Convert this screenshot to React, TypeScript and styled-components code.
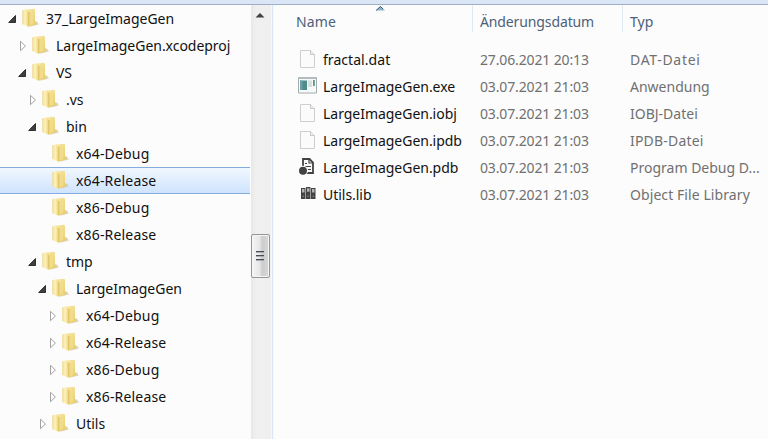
import React from "react";
import styled, { createGlobalStyle, css } from "styled-components";

const GlobalStyle = createGlobalStyle`
  * { box-sizing: border-box; }
  body {
    margin: 0;
    background: #fcfcfc;
    overflow: hidden;
    font-family: "Noto Sans", "Segoe UI", sans-serif;
    font-size: 14px;
    color: #111;
  }
`;

const Window = styled.div`
  height: 439px;
  display: flex;
  flex-direction: column;
  overflow: hidden;
`;

const TopEdge = styled.div`
  flex: none;
  height: 5px;
  background: #dae6f5;
  border-bottom: 1px solid #a0afc3;
`;

const Panes = styled.div`
  flex: 1;
  min-height: 0;
  display: flex;
`;

const Tree = styled.div`
  width: 251px;
  flex: none;
  overflow: hidden;
`;

const TreeRow = styled.div<{ $level: number; $selected?: boolean }>`
  height: 27px;
  display: flex;
  align-items: center;
  padding-left: ${(p) => 7 + p.$level * 10}px;
  ${(p) =>
    p.$selected &&
    css`
      background: linear-gradient(#f1f7fe, #cfe4fe);
      border-top: 1px solid #84acdd;
      border-bottom: 1px solid #84acdd;
      margin-right: 1px;
    `}
`;

const Toggle = styled.svg`
  flex: none;
  width: 12px;
  height: 14px;
`;

const FolderSvg = styled.svg`
  flex: none;
  width: 19px;
  height: 20px;
  margin: 0 6px 1px 2px;
`;

const Label = styled.span<{ $spacing?: number }>`
  white-space: nowrap;
  line-height: 20px;
  letter-spacing: ${(p) => p.$spacing ?? -0.03}px;
`;

const ScrollTrack = styled.div`
  width: 20px;
  flex: none;
  display: flex;
  flex-direction: column;
  align-items: flex-start;
  background: linear-gradient(90deg, #e8e8e8, #f0f0f0 25%, #efefef);
`;

const ScrollArrow = styled.svg`
  width: 10px;
  height: 6px;
  margin: 7px 0 216px 4px;
  flex: none;
`;

const Thumb = styled.div`
  width: 19px;
  height: 44px;
  flex: none;
  display: flex;
  flex-direction: column;
  align-items: center;
  justify-content: center;
  gap: 2px;
  border: 1px solid #959595;
  border-radius: 2px;
  background: linear-gradient(90deg, #f6f6f6, #e6e6e6 45%, #cdcdcd 60%, #d8d8d8);
  box-shadow: inset 0 0 0 1px #f5f5f5;
`;

const Grip = styled.div`
  width: 8px;
  height: 2px;
  margin-left: -1px;
  background: linear-gradient(#484d55 50%, #a8abb0 50%);
`;

const Splitter = styled.div`
  width: 3px;
  flex: none;
  background: linear-gradient(90deg, #f5f8fc 33%, #d9e6f5 33% 66%, #f4f8fd 66%);
`;

const Files = styled.div`
  flex: 1;
  min-width: 0;
`;

const Columns = styled.div`
  display: grid;
  grid-template-columns: 199px 150px 1fr;
`;

const Header = styled(Columns)`
  height: 41px;
  color: #4c607a;
`;

const HeadCell = styled.div<{ $pad: number; $spacing?: number; $divided?: boolean }>`
  position: relative;
  height: 27px;
  padding: 7px 0 0 ${(p) => p.$pad}px;
  line-height: 20px;
  letter-spacing: ${(p) => p.$spacing ?? 0}px;
  border-right: ${(p) => (p.$divided ? "1px solid #e2e8ef" : "none")};
`;

const SortMark = styled.svg`
  position: absolute;
  left: 102px;
  top: 1px;
  width: 9px;
  height: 5px;
`;

const FileRow = styled(Columns)`
  height: 27px;
  align-items: center;
`;

const NameCell = styled.div`
  display: flex;
  align-items: center;
  padding-left: 23px;
`;

const FileSvg = styled.svg`
  flex: none;
  width: 20px;
  height: 20px;
  margin: 0 6px 1px 0;
`;

const Meta = styled.div<{ $spacing: number }>`
  padding-left: 7px;
  color: #707070;
  white-space: nowrap;
  line-height: 20px;
  letter-spacing: ${(p) => p.$spacing}px;
`;

type State = "open" | "closed" | "leaf";

function Arrow({ state }: { state: State }) {
  return (
    <Toggle viewBox="0 0 12 14">
      {state === "open" && <path d="M8.5 3.500v7H1.700z" fill="#404040" stroke="#303030" />}
      {state === "closed" && <path d="M3.5 2.3v9.4L8.4 7z" fill="#fff" stroke="#a3a3a3" />}
    </Toggle>
  );
}

function Folder() {
  return (
    <FolderSvg viewBox="0 0 19 20">
      <defs>
        <linearGradient id="folderFront" x1="0" y1="0" x2="1" y2="0">
          <stop offset="0" stopColor="#ecd993" />
          <stop offset=".45" stopColor="#fff3bd" />
          <stop offset="1" stopColor="#e9d077" />
        </linearGradient>
        <linearGradient id="folderBack" x1="0" y1="0" x2="1" y2="1">
          <stop offset="0" stopColor="#f9ecb0" />
          <stop offset="1" stopColor="#e8cb62" />
        </linearGradient>
      </defs>
      <path d="M9 18.800l9-2.300-2-3-4 1z" fill="#c4c4c4" opacity=".65" />
      <path d="M3 1.700l10-.9 1 1V13l1.500 1v2.500L8 18.500z" fill="url(#folderBack)" />
      <path d="M8 4.500l4-1.200v12l-4 2.500z" fill="#f1dc8b" />
      <path d="M1.200 2.300l4-.5L7.800 4v14.800L5.500 18l-4.300-2z" fill="url(#folderFront)" />
      <path d="M7.800 4v14.300" stroke="#d9bb5c" strokeWidth=".8" />
    </FolderSvg>
  );
}

type Kind = "page" | "exe" | "pdb" | "lib";

function FileIcon({ kind }: { kind: Kind }) {
  return (
    <FileSvg viewBox="0 0 20 20">
      {kind === "page" && (
        <>
          <path d="M3.500 1.500h10l4 4v13h-14z" fill="#fbfbfb" stroke="#cecece" />
          <path d="M13.500 1.500v4h4" fill="#eee" stroke="#c8c8c8" />
        </>
      )}
      {kind === "exe" && (
        <>
          <path d="M1.500 1.500h18v15.500h-18z" fill="#f8fafa" stroke="#a3acb0" />
          <path d="M1 1h19v2H1z" fill="#b3bbbf" />
          <path d="M3 4.500h7v9.500H3z" fill="#4c8c89" />
          <path d="M3 4.500h2.500V14H3z" fill="#6d9fab" />
          <path d="M11 4.500h4V11h-4z" fill="#d9dfdf" />
          <path d="M16 4h1.800v6H16z" fill="#5a9a80" />
        </>
      )}
      {kind === "pdb" && (
        <>
          <path d="M6 2h6.500l3.500 3.500V16H6z" fill="#f9f9f9" stroke="#424242" strokeWidth="1.800" />
          <path d="M12 2v4h4" fill="none" stroke="#424242" strokeWidth="1.200" />
          <path d="M8 6.500h2M8 9.500h6M10.500 12.500h3.500" stroke="#424242" strokeWidth="1.200" />
          <circle cx="6" cy="13.700" r="5" fill="#fcfcfc" />
          <circle cx="6" cy="13.700" r="4" fill="#424242" />
        </>
      )}
      {kind === "lib" && (
        <>
          <path d="M4 4h4.500v11H4zM9 3h4.500v12H9zM14 4h4.500v11H14z" fill="#424242" />
          <path d="M5 5h2.500v3.500H5zM10 4.300h2.500v3.500H10zM15 5h2.500v3.500H15z" fill="#b4b4b4" />
          <path d="M5.500 11.500H7V13H5.500zM10.500 11.500H12V13h-1.500zM15.500 11.500H17V13h-1.500z" fill="#777" />
        </>
      )}
    </FileSvg>
  );
}

const nodes: [string, number, State][] = [
  ["37_LargeImageGen", 0, "open"],
  ["LargeImageGen.xcodeproj", 1, "closed"],
  ["VS", 1, "open"],
  [".vs", 2, "closed"],
  ["bin", 2, "open"],
  ["x64-Debug", 3, "leaf"],
  ["x64-Release", 3, "leaf"],
  ["x86-Debug", 3, "leaf"],
  ["x86-Release", 3, "leaf"],
  ["tmp", 2, "open"],
  ["LargeImageGen", 3, "open"],
  ["x64-Debug", 4, "closed"],
  ["x64-Release", 4, "closed"],
  ["x86-Debug", 4, "closed"],
  ["x86-Release", 4, "closed"],
  ["Utils", 3, "closed"],
];

const files: [string, string, string, Kind][] = [
  ["fractal.dat", "27.06.2021 20:13", "DAT-Datei", "page"],
  ["LargeImageGen.exe", "03.07.2021 21:03", "Anwendung", "exe"],
  ["LargeImageGen.iobj", "03.07.2021 21:03", "IOBJ-Datei", "page"],
  ["LargeImageGen.ipdb", "03.07.2021 21:03", "IPDB-Datei", "page"],
  ["LargeImageGen.pdb", "03.07.2021 21:03", "Program Debug D...", "pdb"],
  ["Utils.lib", "03.07.2021 21:03", "Object File Library", "lib"],
];

const typeSpacing: Record<string, number> = {
  "DAT-Datei": 0.7,
  "IOBJ-Datei": 0,
  "IPDB-Datei": 0.2,
  "Object File Library": 0.08,
};

export default function App() {
  return (
    <>
      <GlobalStyle />
      <Window>
        <TopEdge />
        <Panes>
          <Tree>
            {nodes.map(([name, level, state], i) => (
              <TreeRow key={i} $level={level} $selected={i === 6}>
                <Arrow state={state} />
                <Folder />
                <Label $spacing={name.startsWith("x") ? 0.17 : undefined}>{name}</Label>
              </TreeRow>
            ))}
          </Tree>
          <ScrollTrack>
            <ScrollArrow viewBox="0 0 10 6">
              <path d="M5 1l4.500 4.500h-9z" fill="#404040" />
            </ScrollArrow>
            <Thumb>
              <Grip />
              <Grip />
              <Grip />
            </Thumb>
          </ScrollTrack>
          <Splitter />
          <Files>
            <Header>
              <HeadCell $pad={22} $spacing={0.15} $divided>
                Name
                <SortMark viewBox="0 0 9 5">
                  <path d="M4.500 0L9 4.500H0z" fill="#8db4cc" />
                  <path d="M0 4.500L4.500.5 7 3" fill="none" stroke="#3c5e72" />
                </SortMark>
              </HeadCell>
              <HeadCell $pad={7} $spacing={-0.12} $divided>Änderungsdatum</HeadCell>
              <HeadCell $pad={7}>Typ</HeadCell>
            </Header>
            {files.map(([name, date, type, kind]) => (
              <FileRow key={name}>
                <NameCell>
                  <FileIcon kind={kind} />
                  <Label $spacing={name === "fractal.dat" ? 0.05 : undefined}>{name}</Label>
                </NameCell>
                <Meta $spacing={-0.14}>{date}</Meta>
                <Meta $spacing={typeSpacing[type] ?? 0}>{type}</Meta>
              </FileRow>
            ))}
          </Files>
        </Panes>
      </Window>
    </>
  );
}
